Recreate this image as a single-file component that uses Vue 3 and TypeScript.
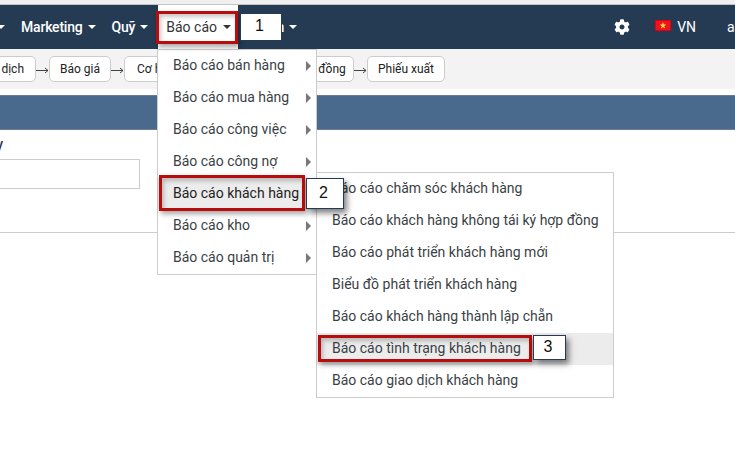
<script setup lang="ts">
interface MenuItem {
  label: string;
  hasSub?: boolean;
  active?: boolean;
}

const reportMenu: MenuItem[] = [
  { label: 'Báo cáo bán hàng', hasSub: true },
  { label: 'Báo cáo mua hàng', hasSub: true },
  { label: 'Báo cáo công việc', hasSub: true },
  { label: 'Báo cáo công nợ', hasSub: true },
  { label: 'Báo cáo khách hàng', hasSub: true, active: true },
  { label: 'Báo cáo kho', hasSub: true },
  { label: 'Báo cáo quản trị', hasSub: true }
];

const customerMenu: MenuItem[] = [
  { label: 'Báo cáo chăm sóc khách hàng' },
  { label: 'Báo cáo khách hàng không tái ký hợp đồng' },
  { label: 'Báo cáo phát triển khách hàng mới' },
  { label: 'Biểu đồ phát triển khách hàng' },
  { label: 'Báo cáo khách hàng thành lập chẵn' },
  { label: 'Báo cáo tình trạng khách hàng', active: true },
  { label: 'Báo cáo giao dịch khách hàng' }
];

const steps = ['Giao dịch', 'Báo giá', 'Cơ hội', 'Khách hàng', 'Hợp đồng', 'Phiếu xuất'];

const callouts = [
  { id: 1, cls: 'c1' },
  { id: 2, cls: 'c2' },
  { id: 3, cls: 'c3' }
];
</script>

<template>
  <div class="page">
    <div class="top-strip"></div>

    <nav class="navbar">
      <div class="nav-left">
        <a class="nav-link first"><span class="caret"></span></a>
        <a class="nav-link">Marketing<span class="caret"></span></a>
        <a class="nav-link">Quỹ<span class="caret"></span></a>
        <a class="nav-link open">Báo cáo<span class="caret"></span></a>
        <a class="nav-link hidden-link">Admin<span class="caret"></span></a>
      </div>
      <div class="nav-right">
        <svg class="gear" viewBox="0 0 512 512" width="16" height="16">
          <path fill="#fff" d="M487 316l-42-25c4-23 4-47 0-70l42-25c5-3 7-9 5-14-11-35-30-67-54-93-4-4-10-5-15-2l-42 25c-18-15-38-27-61-35V28c0-6-4-11-9-12-36-8-73-8-108 0-6 1-10 6-10 12v49c-22 8-43 20-61 35L90 87c-5-3-11-2-15 2-24 26-43 58-54 93-2 5 0 11 5 14l42 25c-4 23-4 47 0 70l-42 25c-5 3-7 9-5 14 11 35 30 67 54 93 4 4 10 5 15 2l42-25c18 15 38 27 61 35v49c0 6 4 11 10 12 36 8 73 8 108 0 5-1 9-6 9-12v-49c23-8 43-20 61-35l42 25c5 3 11 2 15-2 24-26 43-58 54-93 2-5 0-11-5-14zM256 336c-44 0-80-36-80-80s36-80 80-80 80 36 80 80-36 80-80 80z" />
        </svg>
        <svg class="flag" viewBox="0 0 16 11" width="16" height="11">
          <rect width="16" height="11" fill="#f0131e" />
          <rect x="0.5" y="0.5" width="15" height="10" fill="none" stroke="#e0000c" />
          <polygon fill="#ffe638" points="8,2 8.8,4.5 11.2,4.5 9.3,6 10,8.4 8,6.9 6,8.4 6.7,6 4.8,4.5 7.2,4.5" />
        </svg>
        <span class="lang">VN</span>
        <span class="user">admin</span>
      </div>
    </nav>

    <div class="steps">
      <template v-for="(step, i) in steps" :key="step">
        <span class="step" :class="`step-${i}`">{{ step }}</span>
        <span v-if="i < steps.length - 1" class="arrow">
          <svg viewBox="0 0 13 7" width="13" height="7">
            <path d="M0 3.5h12M9 1l3 2.5L9 6" fill="none" stroke="#444" stroke-width="1" />
          </svg>
        </span>
      </template>
    </div>

    <div class="title-bar"></div>

    <section class="filter">
      <label class="filter-label">Ngày</label>
      <input class="filter-input" type="text" />
    </section>

    <hr class="divider" />

    <ul class="menu menu-main">
      <li v-for="item in reportMenu" :key="item.label" class="menu-item" :class="{ active: item.active }">
        {{ item.label }}
        <span v-if="item.hasSub" class="sub-arrow"></span>
      </li>
    </ul>

    <ul class="menu menu-sub">
      <li v-for="item in customerMenu" :key="item.label" class="menu-item" :class="{ active: item.active }">
        {{ item.label }}
      </li>
    </ul>

    <div class="red-box r1"></div>
    <div class="red-box r2"></div>
    <div class="red-box r3"></div>
    <div v-for="c in callouts" :key="c.id" class="callout" :class="c.cls">{{ c.id }}</div>
  </div>
</template>

<style>
html, body {
  margin: 0;
  background: #fff;
  overflow: hidden;
}
</style>

<style scoped>
.page {
  position: relative;
  width: 735px;
  height: 475px;
  overflow: hidden;
  background: #fff;
  font-family: Roboto, "Noto Sans", sans-serif;
  font-size: 14px;
  color: #333;
}

.top-strip {
  height: 4px;
  background: #f0f0f0;
  border-bottom: 1px solid #c4c4c4;
}

.navbar {
  height: 44px;
  background: #253b54;
  display: flex;
  justify-content: space-between;
  color: #fff;
}

.nav-left {
  display: flex;
  margin-left: -11px;
}

.nav-link {
  display: flex;
  align-items: center;
  gap: 5px;
  padding: 0 8px;
  font-weight: 500;
  letter-spacing: -0.2px;
  white-space: pre;
}

.nav-link.open {
  margin-left: 2px;
  background: #fff;
  color: #333;
  font-weight: 400;
  letter-spacing: 0;
  width: 80px;
  box-sizing: border-box;
  gap: 6px;
}

.hidden-link {
  margin-left: -2px;
}

.caret {
  display: inline-block;
  width: 0;
  height: 0;
  border-top: 4px solid currentColor;
  border-left: 4px solid transparent;
  border-right: 4px solid transparent;
}

.nav-right {
  display: flex;
  align-items: center;
  margin-right: -31px;
}

.gear {
  margin-right: 25px;
}

.flag {
  margin-right: 6px;
  margin-top: -4px;
}

.lang {
  margin-right: 31px;
  font-size: 14px;
}

.steps {
  height: 40px;
  background: #f3f3f3;
  display: flex;
  align-items: center;
  margin-left: -38px;
}

.step {
  box-sizing: border-box;
  height: 26px;
  display: flex;
  align-items: center;
  justify-content: center;
  background: #fff;
  border: 1px solid #ccc;
  border-radius: 5px;
  font-size: 12px;
  color: #222;
  white-space: nowrap;
}

.step-0 { width: 74px; }
.step-1 { width: 62px; }
.step-2 { width: 60px; }
.step-3 { width: 75px; }
.step-4 { width: 69px; }
.step-5 { width: 78px; }

.arrow {
  width: 13px;
  display: flex;
  align-items: center;
  justify-content: center;
  margin-top: 3px;
}

.title-bar {
  height: 33px;
  margin-top: 6px;
  background: #4a6a8d;
  border-top: 1px solid #6a7c90;
  border-bottom: 1px solid #6f7f92;
}

.filter {
  display: flex;
  flex-direction: column;
  margin-left: -137px;
  padding-top: 5px;
}

.filter-label {
  height: 18px;
  width: 140px;
  text-align: right;
  line-height: 18px;
  color: #334;
  font-weight: 500;
}

.filter-input {
  box-sizing: border-box;
  width: 277px;
  height: 30px;
  margin: 6px 0 0;
  border: 1px solid #ccc;
  background: #fff;
  outline: none;
}

.divider {
  margin: 43px 0 0;
  border: 0;
  border-top: 1px solid #ccc;
}

.menu {
  position: absolute;
  box-sizing: border-box;
  margin: 0;
  padding: 0;
  list-style: none;
  background: #fff;
  border: 1px solid #ccc;
}

.menu-main {
  left: 157px;
  top: 49px;
  width: 160px;
  height: 226px;
}

.menu-sub {
  left: 316px;
  top: 172px;
  width: 298px;
  height: 226px;
}

.menu-item {
  position: relative;
  height: 32px;
  line-height: 31px;
  padding-left: 15px;
  white-space: nowrap;
  color: #3b3f45;
}

.menu-item.active {
  background: #ececec;
}

.menu-main .menu-item.active {
  color: #222;
}

.sub-arrow {
  position: absolute;
  right: 5px;
  top: 11px;
  width: 0;
  height: 0;
  border-left: 5px solid #777;
  border-top: 5px solid transparent;
  border-bottom: 5px solid transparent;
}

.red-box {
  position: absolute;
  box-sizing: border-box;
  border: 3px solid #b80d0d;
  box-shadow: 2px 3px 5px rgba(0, 0, 0, 0.35), inset 2px 3px 4px rgba(0, 0, 0, 0.22);
}

.r1 { left: 156px; top: 11px; width: 82px; height: 33px; }
.r2 { left: 159px; top: 175px; width: 146px; height: 36px; }
.r3 { left: 318px; top: 335px; width: 214px; height: 27px; }

.callout {
  position: absolute;
  box-sizing: border-box;
  display: flex;
  align-items: center;
  justify-content: center;
  padding: 0 3px 2px 0;
  background: #fff;
  border: 1px solid #253b54;
  color: #111;
  font-family: "Liberation Sans", Arial, sans-serif;
  font-size: 16px;
  box-shadow: 3px 4px 6px rgba(0, 0, 0, 0.5);
}

.c1 { left: 240px; top: 13px; width: 42px; height: 28px; box-shadow: none; }
.c2 { left: 306px; top: 178px; width: 38px; height: 31px; }
.c3 { left: 533px; top: 335px; width: 33px; height: 25px; }
</style>
